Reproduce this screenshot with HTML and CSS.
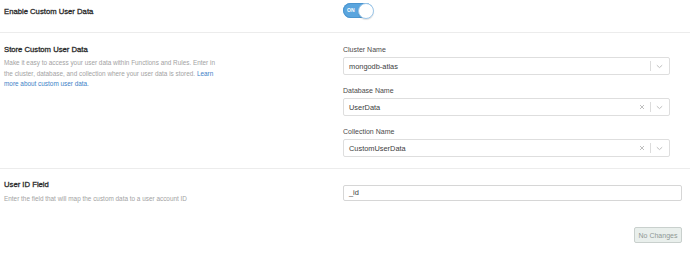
FILE: index.html
```html
<!DOCTYPE html>
<html>
<head>
<meta charset="utf-8">
<link rel="stylesheet" href="styles.css">
</head>
<body>
<div class="page">
  <section class="row row-toggle">
    <div class="left"><h2 class="title">Enable Custom User Data</h2></div>
    <div class="right">
      <div class="toggle"><span class="toggle-text">ON</span><span class="knob"></span></div>
    </div>
  </section>

  <section class="row row-store">
    <div class="left">
      <h2 class="title">Store Custom User Data</h2>
      <p class="desc">Make it easy to access your user data within Functions and Rules. Enter in the cluster, database, and collection where your user data is stored. <a class="link" href="#">Learn more about custom user data.</a></p>
    </div>
    <div class="right fields">
      <div class="field">
        <label class="label">Cluster Name</label>
        <div class="select">
          <span class="value">mongodb-atlas</span>
          <span class="sep"></span>
          <svg class="chev" width="7" height="5" viewBox="0 0 7 5"><path d="M0.8 1.2 L3.5 3.6 L6.2 1.2" fill="none" stroke="#b8b8b8" stroke-width="0.9"/></svg>
        </div>
      </div>
      <div class="field">
        <label class="label">Database Name</label>
        <div class="select">
          <span class="value">UserData</span>
          <svg class="clear" width="6" height="6" viewBox="0 0 6 6"><path d="M1 1 L5 5 M5 1 L1 5" stroke="#b8b8b8" stroke-width="0.9"/></svg>
          <span class="sep"></span>
          <svg class="chev" width="7" height="5" viewBox="0 0 7 5"><path d="M0.8 1.2 L3.5 3.6 L6.2 1.2" fill="none" stroke="#b8b8b8" stroke-width="0.9"/></svg>
        </div>
      </div>
      <div class="field">
        <label class="label">Collection Name</label>
        <div class="select">
          <span class="value">CustomUserData</span>
          <svg class="clear" width="6" height="6" viewBox="0 0 6 6"><path d="M1 1 L5 5 M5 1 L1 5" stroke="#b8b8b8" stroke-width="0.9"/></svg>
          <span class="sep"></span>
          <svg class="chev" width="7" height="5" viewBox="0 0 7 5"><path d="M0.8 1.2 L3.5 3.6 L6.2 1.2" fill="none" stroke="#b8b8b8" stroke-width="0.9"/></svg>
        </div>
      </div>
    </div>
  </section>

  <section class="row row-id">
    <div class="left">
      <h2 class="title">User ID Field</h2>
      <p class="desc">Enter the field that will map the custom data to a user account ID</p>
    </div>
    <div class="right">
      <div class="input">_id</div>
    </div>
  </section>

  <div class="actions">
    <button class="btn">No Changes</button>
  </div>
</div>
</body>
</html>
```

FILE: styles.css
```css
* { box-sizing: border-box; }
html, body { margin: 0; padding: 0; background: #fff; }
body {
  font-family: "Liberation Sans", Arial, sans-serif;
  color: #333;
  width: 690px;
  height: 254px;
  overflow: hidden;
}
.page { padding: 0 8px 0 4px; }
.row {
  display: grid;
  grid-template-columns: 339px 1fr;
  border-bottom: 1px solid #ececec;
  margin-right: -8px;
  margin-left: -4px;
  padding-left: 4px;
  padding-right: 8px;
}
.title {
  margin: 0;
  font-size: 7.7px;
  font-weight: normal;
  -webkit-text-stroke: 0.3px #2a2a2a;
  color: #2a2a2a;
  line-height: 10px;
}
.desc {
  margin: 0;
  font-size: 6.4px;
  line-height: 10.6px;
  color: #a3a3a3;
  max-width: 219px;
}
.row-id .desc { max-width: none; }
.link { color: #3d7fc7; text-decoration: none; }

.row-toggle { height: 33px; align-items: start; }
.row-toggle .left { padding-top: 7px; }
.row-toggle .right { padding-top: 3px; }
.toggle {
  position: relative;
  width: 30px;
  height: 15px;
  border-radius: 8px;
  background: #5aa5de;
  box-shadow: inset 0 0 0 1px #4b95cf;
}
.toggle-text {
  position: absolute;
  left: 4px;
  top: 4px;
  font-size: 5px;
  line-height: 7px;
  font-weight: bold;
  color: #fff;
}
.knob {
  position: absolute;
  right: -1px;
  top: -0.5px;
  width: 16px;
  height: 16px;
  border-radius: 50%;
  background: #fff;
  border: 1px solid #9cc7ea;
  box-shadow: 0 1px 1px rgba(0,0,0,0.12);
}

.row-store { height: 136px; }
.row-store .left { padding-top: 12px; }
.row-store .title { margin-bottom: 3px; }
.fields { padding-top: 12px; display: flex; flex-direction: column; gap: 11px; }
.field { display: flex; flex-direction: column; gap: 2px; }
.label { font-size: 7px; line-height: 10px; color: #4a4a4a; }
.select {
  width: 327px;
  height: 18px;
  border: 1px solid #dedede;
  border-radius: 2px;
  display: flex;
  align-items: center;
  padding: 0 5px;
}
.value { flex: 1; font-size: 7.4px; color: #404040; }
.clear { margin-right: 5px; }
.sep { width: 1px; height: 10px; background: #dcdcdc; margin-right: 5px; }
.chev { display: block; margin-right: 1px; }

.row-id { height: 53px; border-bottom: none; }
.row-id .left { padding-top: 11px; }
.row-id .title { margin-bottom: 4px; }
.row-id .right { padding-top: 16px; }
.input {
  width: 339px;
  height: 16px;
  border: 1px solid #d6d6d6;
  border-radius: 2px;
  padding: 0 5px;
  font-size: 7.4px;
  line-height: 14px;
  color: #3a3a3a;
}

.actions { display: flex; justify-content: flex-end; padding-top: 5px; }
.btn {
  width: 48px;
  height: 16px;
  padding: 0;
  font-family: "Liberation Sans", Arial, sans-serif;
  font-size: 7px;
  color: #8f9895;
  background: #e9efec;
  border: 1px solid #c9d0cd;
  border-radius: 2px;
}
```
